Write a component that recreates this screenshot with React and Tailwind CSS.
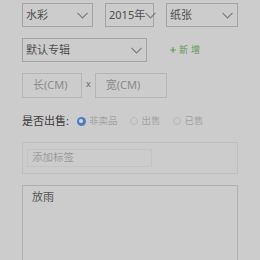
import { Plus } from "lucide-react";

function Chevron() {
  return (
    <svg width="11" height="7" viewBox="0 0 11 7" className="shrink-0" fill="none">
      <polyline points="0.5,0.8 5.5,5.8 10.5,0.8" stroke="#7c7c7c" strokeWidth="1.2" />
    </svg>
  );
}

function Select({ label, className }) {
  return (
    <div
      className={`flex h-[24px] items-center justify-between border border-[#a3a3a3] pl-[3px] pr-[4px] ${className}`}
    >
      <span className="whitespace-nowrap text-[11px] text-[#4e4e4e]">{label}</span>
      <Chevron />
    </div>
  );
}

function Radio({ label, checked }) {
  return (
    <label className="flex items-center gap-[3px]">
      {checked ? (
        <span className="flex h-[9px] w-[9px] items-center justify-center rounded-full bg-[#4a7fc0]">
          <span className="h-[4px] w-[4px] rounded-full bg-[#cfd8e3]" />
        </span>
      ) : (
        <span className="h-[8px] w-[8px] rounded-full border border-[#b8b8b8]" />
      )}
      <span className="text-[9.5px] text-[#a2a2a2]">{label}</span>
    </label>
  );
}

export default function App() {
  return (
    <div
      className="h-[260px] w-[260px] overflow-hidden bg-[#cccccc] px-[22px] pt-[3px]"
      style={{ fontFamily: '"Noto Sans", "Noto Sans CJK SC", sans-serif' }}
    >
      {/* 类型 / 年份 / 材质 */}
      <div className="flex gap-[12px]">
        <Select label="水彩" className="w-[71px]" />
        <Select label="2015年" className="w-[49px] !pr-[1px]" />
        <Select label="纸张" className="w-[72px]" />
      </div>

      {/* 专辑 */}
      <div className="mt-[11px] flex items-center">
        <Select label="默认专辑" className="w-[125px]" />
        <div className="ml-[22px] flex items-center text-[9px] text-[#5a9a5a]">
          <Plus className="h-[8px] w-[8px]" strokeWidth={3.5} />
          <span className="ml-[2px] tracking-[3px]">新增</span>
        </div>
      </div>

      {/* 尺寸 */}
      <div className="mt-[11px] flex items-center">
        <div className="flex h-[25px] w-[60px] items-center border border-[#b5b5b5] pl-[10px] text-[11px] text-[#8a8a8a]">
          长(CM)
        </div>
        <span className="mx-[4px] mb-[4px] text-[9px] text-[#666]">x</span>
        <div className="flex h-[25px] w-[72px] items-center border border-[#b5b5b5] pl-[10px] text-[11px] text-[#8a8a8a]">
          宽(CM)
        </div>
      </div>

      {/* 是否出售 */}
      <div className="mt-[15px] flex items-center">
        <span className="text-[11px] text-[#3c3c3c]">是否出售:</span>
        <div className="ml-[8px] flex items-center gap-[13px]">
          <Radio label="非卖品" checked />
          <Radio label="出售" />
          <Radio label="已售" />
        </div>
      </div>

      {/* 标签 */}
      <div className="mt-[12px] h-[32px] border border-[#c0c0c0] pl-[4px] pt-[6px]">
        <div className="flex h-[18px] w-[125px] items-center border border-[#c4c4c4] pl-[4px] text-[10.5px] text-[#9a9a9a]">
          添加标签
        </div>
      </div>

      {/* 描述 */}
      <div className="mt-[11px] h-[90px] border border-[#b0b0b0] px-[9px] leading-[18px]">
        <span className="text-[11px] text-[#555]">放雨</span>
      </div>
    </div>
  );
}
